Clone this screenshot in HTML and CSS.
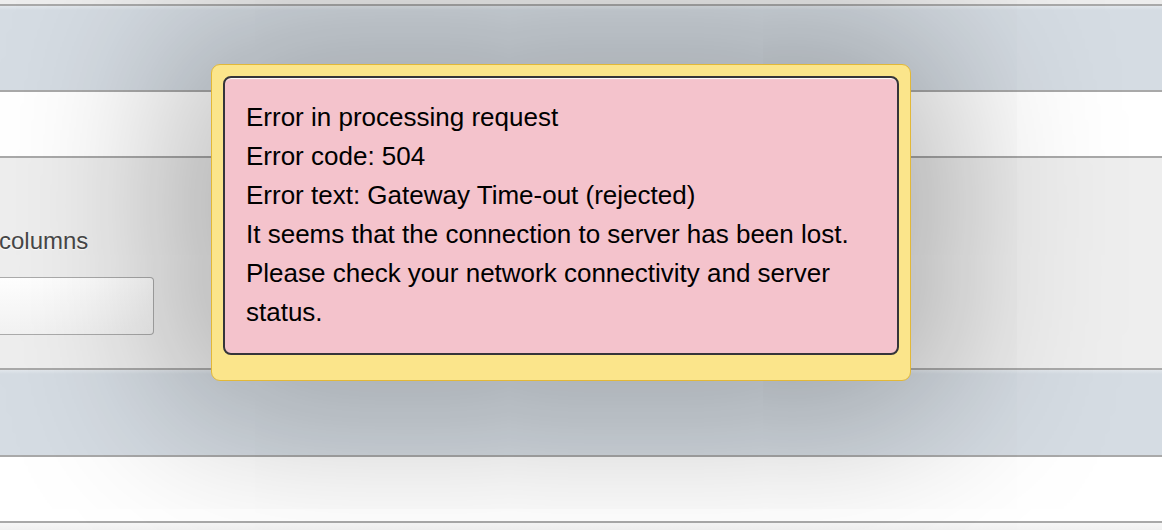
FILE: index.html
```html
<!DOCTYPE html>
<html lang="en">
<head>
<meta charset="utf-8">
<title>Error</title>
<link rel="stylesheet" href="styles.css">
</head>
<body>
<div class="page">
  <div class="strip"></div>
  <div class="band band-blue"></div>
  <div class="band band-white"></div>
  <div class="band band-form">
    <div class="field-label">columns</div>
    <div class="field-input"></div>
  </div>
  <div class="band band-blue band-blue-low"></div>
  <div class="band band-white"></div>
  <div class="strip-bottom"></div>
</div>
<div class="dialog">
  <div class="dialog-body">
    <p>Error in processing request</p>
    <p>Error code: 504</p>
    <p>Error text: Gateway Time-out (rejected)</p>
    <p>It seems that the connection to server has been lost. Please check your network connectivity and server status.</p>
  </div>
</div>
</body>
</html>
```
FILE: styles.css
```css
html, body {
  margin: 0;
  padding: 0;
  width: 1162px;
  height: 530px;
  overflow: hidden;
  background: #eeeeee;
  font-family: "Liberation Sans", Arial, Helvetica, sans-serif;
}

.page {
  display: flex;
  flex-direction: column;
}

.strip {
  height: 4px;
  background: #ededed;
  border-bottom: 2px solid #a9a9a9;
}

.band {
  border-bottom: 2px solid #a9a9a9;
}

.band-blue {
  height: 84px;
  background: linear-gradient(#e2e7ec 0, #d5dce3 4px, #d5dce3 100%);
}

.band-blue-low {
  height: 85px;
}

.band-white {
  height: 64px;
  background: #ffffff;
}

.band-form {
  height: 142px;
  background: #eeeeee;
  display: flex;
  flex-direction: column;
  padding-top: 68px;
}

.field-label {
  font-size: 24px;
  line-height: 30px;
  color: #474747;
  text-shadow: 0 1px 1px #ffffff;
  margin-left: -1px;
}

.field-input {
  margin-top: 21px;
  width: 154px;
  height: 58px;
  box-sizing: border-box;
  border: 1px solid #ababab;
  border-left: none;
  border-radius: 0 4px 4px 0;
  background: linear-gradient(#ffffff, #f2f2f2);
}

.strip-bottom {
  height: 10px;
  background: linear-gradient(#f7f7f7, #eeeeee);
}

.dialog {
  position: absolute;
  left: 211px;
  top: 64px;
  width: 700px;
  height: 317px;
  box-sizing: border-box;
  padding: 11px 11px 25px 11px;
  background: #fbe58b;
  border: 1px solid #e2b838;
  border-radius: 9px;
  box-shadow: 0 0 170px 40px rgba(0, 0, 0, 0.28);
}

.dialog-body {
  height: 100%;
  box-sizing: border-box;
  background: #f4c3cc;
  border: 2px solid #35353a;
  border-radius: 8px;
  padding: 20px 21px;
  box-shadow: inset 0 2px 1px -1px #ffffff;
  color: #000000;
  font-size: 26px;
  line-height: 39px;
}

.dialog-body p {
  margin: 0;
}
```
